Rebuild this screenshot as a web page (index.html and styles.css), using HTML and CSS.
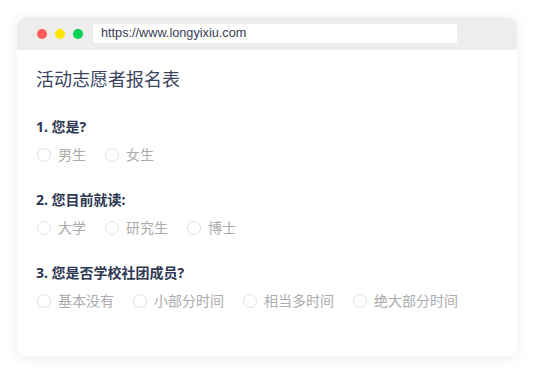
FILE: index.html
```html
<!DOCTYPE html>
<html lang="zh-CN">
<head>
    <meta charset="UTF-8" />
    <title>活动志愿者报名表</title>
    <link rel="stylesheet" href="styles.css">
</head>
<body>
    <div class="window">
        <div class="titlebar">
            <span class="dot red"></span>
            <span class="dot yellow"></span>
            <span class="dot green"></span>
            <div class="url">https://www.longyixiu.com</div>
        </div>
        <div class="content">
            <h1 class="form-title">活动志愿者报名表</h1>

            <div class="question">
                <p class="q-text">1. 您是?</p>
                <div class="options">
                    <label class="option"><span class="radio"></span>男生</label>
                    <label class="option"><span class="radio"></span>女生</label>
                </div>
            </div>

            <div class="question">
                <p class="q-text">2. 您目前就读:</p>
                <div class="options">
                    <label class="option"><span class="radio"></span>大学</label>
                    <label class="option"><span class="radio"></span>研究生</label>
                    <label class="option"><span class="radio"></span>博士</label>
                </div>
            </div>

            <div class="question">
                <p class="q-text">3. 您是否学校社团成员?</p>
                <div class="options">
                    <label class="option"><span class="radio"></span>基本没有</label>
                    <label class="option"><span class="radio"></span>小部分时间</label>
                    <label class="option"><span class="radio"></span>相当多时间</label>
                    <label class="option"><span class="radio"></span>绝大部分时间</label>
                </div>
            </div>
        </div>
    </div>
</body>
</html>
```

FILE: styles.css
```css
html, body{
    margin: 0;
    padding: 0;
    background: #fff;
}
body{
    padding: 17px;
    font-family: "Noto Sans", "Noto Sans CJK SC", sans-serif;
}
.window{
    width: 500px;
    border-radius: 10px;
    background: #fff;
    box-shadow: 0 2px 14px rgba(30, 50, 90, 0.09);
    overflow: hidden;
}
.titlebar{
    height: 33px;
    background: #ededed;
    display: flex;
    align-items: center;
    padding: 0 0 0 20px;
    box-sizing: border-box;
}
.dot{
    width: 10px;
    height: 10px;
    border-radius: 50%;
    margin-right: 8px;
}
.red{
    background: #ff5b5b;
}
.yellow{
    background: #ffe600;
}
.green{
    background: #00d056;
}
.url{
    margin-left: 2px;
    width: 364px;
    height: 19px;
    background: #fff;
    border-radius: 2px;
    font-family: "Liberation Sans", sans-serif;
    font-size: 12.7px;
    line-height: 19px;
    color: #353d54;
    padding-left: 8px;
    box-sizing: border-box;
}
.content{
    padding: 17px 19px 45px;
}
.form-title{
    margin: 0 0 26px;
    font-size: 18px;
    line-height: 24px;
    font-weight: normal;
    color: #3b4460;
}
.question{
    margin-bottom: 25px;
}
.question:last-child{
    margin-bottom: 0;
}
.q-text{
    margin: 0 0 8px;
    font-size: 14px;
    line-height: 20px;
    font-weight: bold;
    color: #2e3752;
}
.options{
    display: flex;
    gap: 18px;
}
.option{
    display: flex;
    align-items: center;
    gap: 7px;
    font-size: 14px;
    line-height: 20px;
    color: #ababab;
}
.radio{
    width: 14px;
    height: 14px;
    border: 1px solid #e2e2e2;
    border-radius: 50%;
    box-sizing: border-box;
    margin-left: 1px;
}
```
